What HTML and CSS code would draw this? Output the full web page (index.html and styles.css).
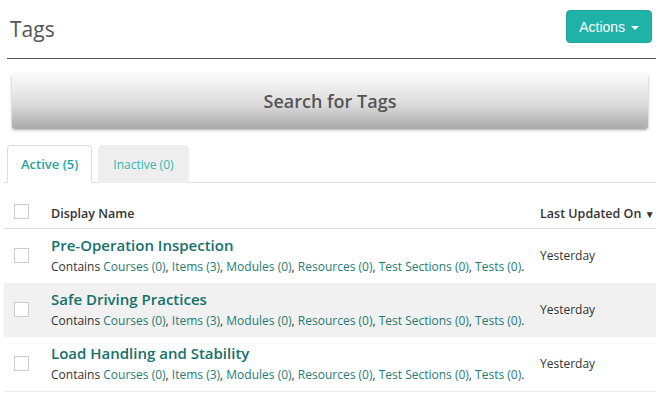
FILE: index.html
```html
<!DOCTYPE html>
<html lang="en">

<head>
    <meta charset="UTF-8">
    <title>Tags</title>
    <link rel="stylesheet" href="styles.css">
</head>

<body>
    <div class="page">
        <div class="page-header">
            <h1>Tags</h1>
            <button class="actions-btn">Actions <span class="caret"></span></button>
        </div>

        <div class="search-bar">Search for Tags</div>

        <ul class="tabs">
            <li class="tab active">Active (5)</li>
            <li class="tab">Inactive (0)</li>
        </ul>

        <table class="tags-table">
            <thead>
                <tr>
                    <th class="col-check"><span class="checkbox"></span></th>
                    <th>Display Name</th>
                    <th class="col-date">Last Updated On <span class="sort">&#9660;</span></th>
                </tr>
            </thead>
            <tbody>
                <tr>
                    <td class="col-check"><span class="checkbox"></span></td>
                    <td>
                        <a class="tag-name">Pre-Operation Inspection</a>
                        <div class="contains">Contains <a>Courses (0)</a>, <a>Items (3)</a>, <a>Modules (0)</a>, <a>Resources (0)</a>, <a>Test Sections (0)</a>, <a>Tests (0)</a>.</div>
                    </td>
                    <td class="col-date">Yesterday</td>
                </tr>
                <tr>
                    <td class="col-check"><span class="checkbox"></span></td>
                    <td>
                        <a class="tag-name">Safe Driving Practices</a>
                        <div class="contains">Contains <a>Courses (0)</a>, <a>Items (3)</a>, <a>Modules (0)</a>, <a>Resources (0)</a>, <a>Test Sections (0)</a>, <a>Tests (0)</a>.</div>
                    </td>
                    <td class="col-date">Yesterday</td>
                </tr>
                <tr>
                    <td class="col-check"><span class="checkbox"></span></td>
                    <td>
                        <a class="tag-name">Load Handling and Stability</a>
                        <div class="contains">Contains <a>Courses (0)</a>, <a>Items (3)</a>, <a>Modules (0)</a>, <a>Resources (0)</a>, <a>Test Sections (0)</a>, <a>Tests (0)</a>.</div>
                    </td>
                    <td class="col-date">Yesterday</td>
                </tr>
            </tbody>
        </table>
    </div>
</body>

</html>
```

FILE: styles.css
```css
body {
    margin: 0;
    background-color: #ffffff;
    color: #333333;
    font-family: 'Open Sans', sans-serif;
}

.page {
    padding: 0 9px 0 4px;
}

.page-header {
    display: flex;
    justify-content: space-between;
    align-items: flex-start;
    margin-left: 3px;
    padding-top: 10px;
    height: 48px;
    border-bottom: 1px solid #555555;
}

.page-header h1 {
    margin: 5px 0 0 3px;
    font-size: 21px;
    font-weight: 400;
    color: #555555;
    line-height: 28px;
}

.actions-btn {
    margin-right: 4px;
    height: 33px;
    padding: 0 12px;
    background-color: #20b2a9;
    color: #ffffff;
    border: 1px solid #1ba59c;
    border-radius: 4px;
    font-family: 'Liberation Sans', Arial, sans-serif;
    font-size: 14px;
}

.caret {
    display: inline-block;
    width: 0;
    height: 0;
    margin-left: 2px;
    vertical-align: middle;
    border-top: 4px solid #ffffff;
    border-left: 4px solid transparent;
    border-right: 4px solid transparent;
}

.search-bar {
    margin: 15px 8px 0 8px;
    height: 55px;
    line-height: 55px;
    text-align: center;
    font-size: 18px;
    font-weight: 600;
    color: #555555;
    border-radius: 3px;
    background: linear-gradient(to bottom, #fbfbfb 0%, #dcdcdc 55%, #a9a9a9 100%);
    box-shadow: 0 1px 3px rgba(0, 0, 0, 0.35);
}

.tabs {
    display: flex;
    gap: 6px;
    list-style: none;
    margin: 16px 0 0 0;
    padding: 0 0 0 3px;
    border-bottom: 1px solid #dddddd;
}

.tab {
    height: 38px;
    line-height: 37px;
    padding: 0 14px;
    margin-bottom: -1px;
    font-size: 12px;
    color: #36b7ae;
    background-color: #eeeeee;
    border: 1px solid #eeeeee;
    border-radius: 4px 4px 0 0;
    box-sizing: border-box;
}

.tab.active {
    padding: 0 13px;
    background-color: #ffffff;
    border-color: #dddddd;
    border-bottom-color: #ffffff;
    font-size: 13px;
    font-weight: 600;
    color: #1fa69d;
}

.tags-table {
    width: 100%;
    border-collapse: collapse;
    font-size: 12px;
}

.tags-table th {
    height: 45px;
    padding: 0 0 6px 0;
    vertical-align: bottom;
    text-align: left;
    font-size: 12.5px;
    font-weight: 600;
    color: #333333;
    border-bottom: 1px solid #dddddd;
    box-sizing: border-box;
}

.tags-table td {
    height: 54px;
    padding: 0;
    vertical-align: middle;
}

.tags-table tbody tr:nth-child(even) td {
    background-color: #f1f1f1;
}

.tags-table tbody tr:last-child td {
    border-bottom: 1px solid #eeeeee;
}

.col-check {
    width: 47px;
}

.checkbox {
    display: block;
    width: 13px;
    height: 13px;
    margin-left: 10px;
    background-color: #ffffff;
    border: 1px solid #cccccc;
}

.tags-table th .checkbox {
    margin-bottom: 3px;
}

.col-date {
    width: 116px;
}

.tags-table th.col-date {
    white-space: nowrap;
}

.sort {
    font-size: 10px;
}

.tag-name {
    display: block;
    font-size: 15px;
    font-weight: 600;
    color: #16706b;
    line-height: 19px;
    margin-top: -1px;
}

.contains {
    margin-top: 3px;
    line-height: 17px;
    color: #333333;
}

.contains a {
    color: #1f7b76;
}
```
